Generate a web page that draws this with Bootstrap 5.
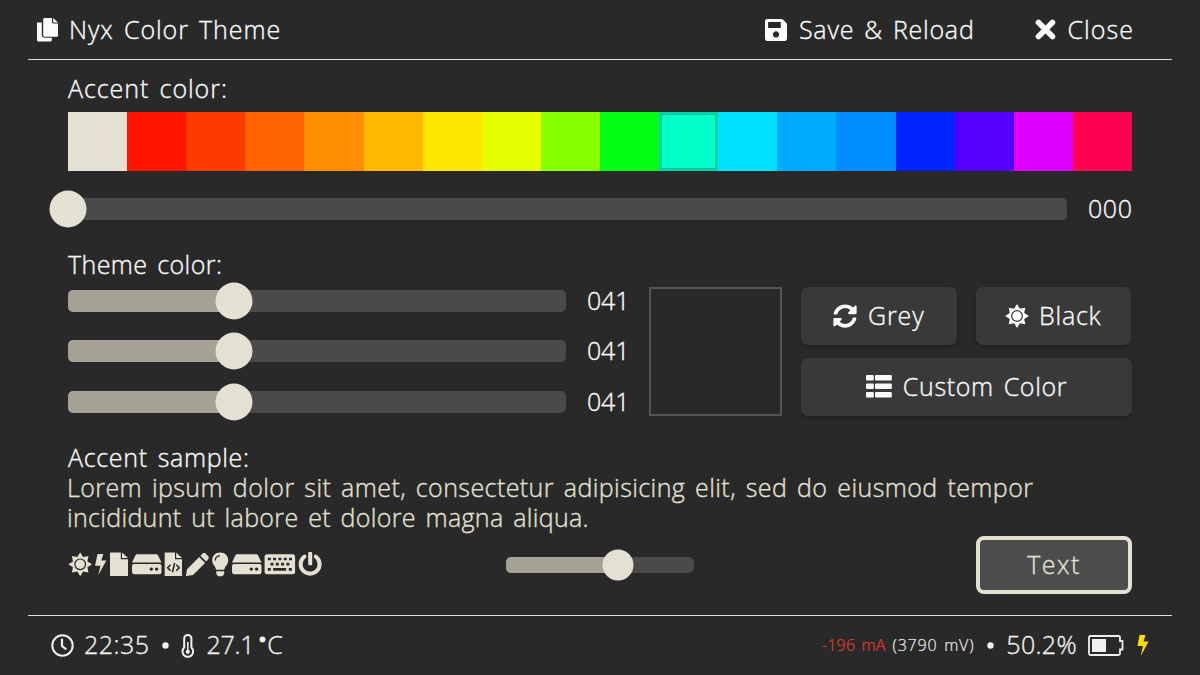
<!DOCTYPE html>
<html lang="en" data-bs-theme="dark">
<head>
<meta charset="utf-8">
<meta name="viewport" content="width=device-width, initial-scale=1">
<title>Nyx Color Theme</title>
<link href="https://cdn.jsdelivr.net/npm/bootstrap@5.3.0/dist/css/bootstrap.min.css" rel="stylesheet">
<style>
  :root { --accent: #e4e1d2; --accent-dim: #a5a295; --track: #4a4a4a; --line: #dcdcdc; }
  body { width: 1200px; height: 675px; background: #292929; color: #fbfbfb; overflow: hidden;
    font-family: "Open Sans", sans-serif; font-weight: 300; font-size: 25px; line-height: 30px;
    letter-spacing: .9px; word-spacing: 2.8px; white-space: nowrap; -webkit-text-stroke: .35px currentColor; }
  svg { display: block; flex: none; fill: currentColor; }
  .topbar { height: 60px; margin: 0 28px; padding: 0 38px 0 9px; border-bottom: 1px solid var(--line); }
  .bottombar { height: 60px; margin: 0 28px; padding: 0 23px; border-top: 1px solid var(--line); color: #f0f0f0; letter-spacing: .4px; }
  .bottombar span { margin-top: -3px; }
  .main-area { height: 555px; padding: 13px 68px 0; }
  .plain-btn { background: none; border: 0; padding: 0; color: inherit; font: inherit; letter-spacing: inherit; word-spacing: inherit; }
  .plain-btn span, .act span, .topbar > span { margin-top: -2px; }
  .swatches { height: 59.2px; width: 1064px; margin-top: 9.3px; }
  .swatches > div { flex: 1 1 0; }
  .swatches > .picked { box-shadow: inset 0 0 0 2px #00d3a8, inset 0 0 0 3px #00bf96; }
  .slide { height: 22px; background: var(--track); border-radius: 5px; position: relative; }
  .slide .fill { height: 100%; background: var(--accent-dim); border-radius: 5px 0 0 5px; }
  .slide .knob { position: absolute; top: 50%; width: 37px; height: 37px; border-radius: 50%;
    background: var(--accent); transform: translate(-50%, -50%); }
  .slide.mini { height: 16px; width: 188px; }
  .slide.mini .knob { width: 31px; height: 31px; }
  .val { width: 44px; margin-top: -2px; }
  .theme-grid { height: 129px; margin-top: 8px; }
  .rgb-rows { margin-top: -11.5px; letter-spacing: -.2px; }
  .rgb-row { height: 50.5px; }
  .preview { width: 133px; height: 129px; border: 2px solid #545454; }
  .act { background: #393939; color: #fbfbfb; border: 0; border-radius: 7px; height: 58px; padding: 0;
    font: inherit; letter-spacing: inherit; word-spacing: inherit; box-shadow: 0 2px 3px rgba(0,0,0,.22); }
  .act.half { width: 155.5px; }
  .act.focus-accent { width: 156px; border: 4px solid var(--accent); background: #4d4d4d; color: var(--accent); border-radius: 8px; box-shadow: none; }
  .lorem { color: var(--accent); letter-spacing: .42px; word-spacing: 2.9px; margin-left: -1px; }
  .icons-row { color: var(--accent); }
  .bottombar .small-info { font-size: 16px; letter-spacing: .6px; word-spacing: 1.8px; -webkit-text-stroke-width: .2px; margin-top: -1px; }
</style>
</head>
<body>

<header class="topbar d-flex align-items-center">
  <svg width="22" height="24" viewBox="0 0 22 24"><path d="M0 4.500h4.800v12.200q0 3 3 3h7v2.300q0 1.500-1.500 1.500H1.500Q0 23.500 0 22z"/><path d="M7.500 0h7.500v4q0 1.500 1.500 1.500h4.500v12.300q0 1-1 1H7.500q-1.300 0-1.300-1.300V1.300Q6.200 0 7.500 0z"/><path d="M16.200 0 21 4.600h-4.800z"/></svg>
  <span style="margin-left:10px;letter-spacing:.93px">Nyx Color Theme</span>
  <div class="ms-auto d-flex align-items-center">
    <button class="plain-btn d-flex align-items-center">
      <svg width="22" height="22" viewBox="0 0 22 22"><path fill-rule="evenodd" d="M2.300 0h14.200q.8 0 1.400.6l3.500 3.500q.6.600.6 1.400v14.200q0 2.300-2.300 2.300H2.300Q0 22 0 19.700V2.300Q0 0 2.300 0zM3.100 3.100v6h12.700v-6zM11 12.300a3.150 3.150 0 1 0 .01 0z"/></svg>
      <span style="margin-left:12px;letter-spacing:.77px">Save &amp; Reload</span>
    </button>
    <button class="plain-btn d-flex align-items-center" style="margin-left:60px">
      <svg width="21" height="21" viewBox="0 0 21 21"><path d="M3.500 3.500 17.500 17.500M17.500 3.500 3.500 17.500" stroke="currentColor" stroke-width="5.600" stroke-linecap="round"/></svg>
      <span style="margin-left:12px;letter-spacing:1.050px">Close</span>
    </button>
  </div>
</header>

<main class="main-area d-flex flex-column">
  <div style="letter-spacing:.95px">Accent color:</div>
  <div class="swatches d-flex" id="swatches"></div>

  <div class="d-flex align-items-center" style="margin-top:24px">
    <div class="slide" style="width:999px"><div class="knob" style="left:-.500px"></div></div>
    <div class="val" style="margin-left:21px;letter-spacing:.6px">000</div>
  </div>

  <div style="margin-top:25.500px;letter-spacing:.42px">Theme color:</div>
  <div class="theme-grid d-flex">
    <div class="rgb-rows" id="rgb"></div>
    <div class="preview" style="margin-left:18px"></div>
    <div class="d-flex flex-column justify-content-between" style="width:331px;margin-left:19px">
      <div class="d-flex justify-content-between" style="width:330px">
        <button class="act half d-flex align-items-center justify-content-center">
          <svg width="24" height="24" viewBox="0 0 512 512"><path d="M370.720 133.280C339.458 104.008 298.888 87.962 255.848 88c-77.458.068-144.328 53.178-162.791 126.850-1.344 5.363-6.122 9.150-11.651 9.150H24.103c-7.498 0-13.194-6.807-11.807-14.176C33.933 94.924 134.813 8 256 8c66.448 0 126.791 26.136 171.315 68.685L463.030 40.970C478.149 25.851 504 36.559 504 57.941V192c0 13.255-10.745 24-24 24H345.941c-21.382 0-32.090-25.851-16.971-40.971l41.750-41.749zM32 296h134.059c21.382 0 32.090 25.851 16.971 40.971l-41.750 41.750c31.262 29.273 71.835 45.319 114.876 45.280 77.418-.070 144.315-53.144 162.787-126.849 1.344-5.363 6.122-9.150 11.651-9.150h57.304c7.498 0 13.194 6.807 11.807 14.176C478.067 417.076 377.187 504 256 504c-66.448 0-126.791-26.136-171.315-68.685L48.970 471.030C33.851 486.149 8 475.441 8 454.059V320c0-13.255 10.745-24 24-24z"/></svg>
          <span style="margin-left:11px">Grey</span>
        </button>
        <button class="act half d-flex align-items-center justify-content-center">
          <svg width="24" height="24" viewBox="-12 -12 24 24"><use href="#sun"/><circle r="4.700"/></svg>
          <span style="margin-left:10px;letter-spacing:.75px">Black</span>
        </button>
      </div>
      <button class="act d-flex align-items-center justify-content-center">
        <svg width="26" height="23" viewBox="0 0 26 23"><rect width="7.800" height="5.500" rx="1"/><rect x="9" width="16.800" height="5.500" rx="1"/><rect y="8.500" width="7.800" height="5.500" rx="1"/><rect x="9" y="8.500" width="16.800" height="5.500" rx="1"/><rect y="17" width="7.800" height="5.500" rx="1"/><rect x="9" y="17" width="16.800" height="5.500" rx="1"/></svg>
        <span style="margin-left:11px;letter-spacing:.65px">Custom Color</span>
      </button>
    </div>
  </div>

  <div style="margin-top:26px;letter-spacing:.68px">Accent sample:</div>
  <div class="lorem">Lorem ipsum dolor sit amet, consectetur adipisicing elit, sed do eiusmod tempor<br><span style="letter-spacing:.32px">incididunt ut labore et dolore magna aliqua.</span></div>

  <div class="d-flex align-items-center" style="margin-top:4px;height:58px">
    <svg class="icons-row" width="256" height="26" viewBox="68 551 256 26" style="margin-top:-2px">
      <defs>
        <path id="sun" fill-rule="evenodd" d="M0-11.900 2.900-7.200 8.300-8.300 7.200-2.900 11.900 0 7.200 2.900 8.300 8.300 2.900 7.200 0 11.900-2.900 7.200-8.300 8.300-7.200 2.900-11.900 0-7.200-2.900-8.300-8.300-2.900-7.200zM0-5.900A5.900 5.900 0 1 0 .01-5.900z"/>
        <g id="drive"><path d="M5 0H24.500q.9 0 1.400.8L29.500 8.300H0L3.600.8Q4.100 0 5 0z"/><path fill-rule="evenodd" d="M2 9.800H27.500q2 0 2 2V17.800q0 2.200-2.200 2.200H2.200Q0 20 0 17.800V11.800q0-2 2-2zM19.300 13.200a1.650 1.650 0 1 0 .01 0zM24.600 13.200a1.650 1.650 0 1 0 .01 0z"/></g>
      </defs>
      <g transform="translate(80.200 564.300)"><use href="#sun"/><circle r="4.700"/></g>
      <path d="M97.500 554h5.800l-1.900 6.500h5L98.300 575l2.100-9.300h-5.400z"/>
      <path d="M110 552.500h10.800v6.800h7.200v16.700h-18zM122 552.500l6 5.600h-6z"/>
      <use href="#drive" x="132" y="554.300"/>
      <path d="M164.700 552.500h10.300v6.800h7v16.700h-17.300zM176.200 552.500l5.800 5.600h-5.800z"/>
      <path d="m170.500 564.800-2.800 3 2.800 3M176.300 564.800l2.800 3-2.800 3M174.600 563l-2.200 9.300" fill="none" stroke="#292929" stroke-width="1.600"/>
      <path d="M187 569.300 199.200 557l5.900 5.900L193 575l-6.500 1q-.6 0-.5-.6zM200.400 555.800l2.200-2.300q1.400-1.400 2.900 0l2.700 2.700q1.500 1.500 0 3l-2 2.300z"/>
      <path d="M220.200 552.500c5 0 8 3.500 8 7.700 0 4.500-3.100 5.300-4 9.600h-8c-.9-4.300-4-5.100-4-9.600 0-4.200 3-7.700 8-7.700zM216.300 571.300h7.900v2.700l-1.900 2.200h-4.100l-1.900-2.200z"/>
      <path d="M215.300 560.500q0-4.300 4.700-4.800" fill="none" stroke="#292929" stroke-width="1.300"/>
      <use href="#drive" x="232" y="554.300"/>
      <rect x="264.600" y="554.300" width="30.500" height="20" rx="2.500"/>
      <g fill="none" stroke="#292929" stroke-width="2.700"><path d="M267.800 559h24.500" stroke-dasharray="3 2.300"/><path d="M270.500 564.200h19" stroke-dasharray="3 2.300"/><path d="M267.800 569.400h3M273.200 569.400h13M288.800 569.400h3"/></g>
      <path d="M304.500 556.500a9.500 9.500 0 1 0 11.200 0" fill="none" stroke="currentColor" stroke-width="4" stroke-linecap="round"/><rect x="308.200" y="552" width="4" height="13.300" rx="1"/>
    </svg>
    <div class="slide mini" style="margin-left:182px"><div class="fill" style="width:60%"></div><div class="knob" style="left:112px"></div></div>
    <button class="act focus-accent ms-auto" style="letter-spacing:1.500px"><span class="d-block">Text</span></button>
  </div>
</main>

<footer class="bottombar d-flex align-items-center">
  <svg width="23" height="23" viewBox="0 0 23 23" style="fill:none" stroke="currentColor"><circle cx="11.500" cy="11.500" r="10.200" stroke-width="2"/><path d="M11 4.800v7.200l4.300 3.300" stroke-width="2.200"/></svg>
  <span style="margin-left:10px;letter-spacing:.5px">22:35</span>
  <svg width="7" height="7" viewBox="0 0 7 7" style="margin-left:12px"><circle cx="3.500" cy="3.500" r="3.200"/></svg>
  <svg width="14" height="24" viewBox="0 0 14 24" style="margin-left:12px;fill:none" stroke="currentColor"><path d="M3.200 13.600V4.600a3.600 3.600 0 0 1 7.200 0v9a5.300 5.300 0 1 1-7.200 0z" stroke-width="2"/><path d="M6.800 8v9" stroke-width="1.600"/><circle cx="6.800" cy="17.800" r="2.100" fill="currentColor" stroke="none"/></svg>
  <span style="margin-left:12px;letter-spacing:-.3px">27.1</span>
  <svg width="7" height="7" viewBox="0 0 7 7" style="margin-left:5px;margin-bottom:13px"><circle cx="3.500" cy="3.500" r="3"/></svg>
  <span style="margin-left:1px">C</span>
  <div class="ms-auto d-flex align-items-center">
    <span class="small-info" style="color:#e63b2c;letter-spacing:.2px">-196 mA</span>
    <span class="small-info" style="margin-left:7px;letter-spacing:.8px">(3790 mV)</span>
    <svg width="7" height="7" viewBox="0 0 7 7" style="margin-left:13px"><circle cx="3.500" cy="3.500" r="3.200"/></svg>
    <span style="margin-left:12px;letter-spacing:.35px">50.2%</span>
    <svg width="36" height="21" viewBox="0 0 36 21" style="margin-left:11px"><path d="M2.500 1h28q1.500 0 1.500 1.500V6h2.500v8.500H32v4q0 1.500-1.500 1.500h-28Q1 20 1 18.500v-16Q1 1 2.500 1z" fill="none" stroke="currentColor" stroke-width="1.800"/><rect x="4" y="4" width="14" height="13"/></svg>
    <svg width="12" height="21" viewBox="0 0 12 21" style="color:#ffdc00;margin-left:13px"><path d="M2.500 0h6L6.600 6.500h5L3.800 21l2.100-10H.5z"/></svg>
  </div>
</footer>

<script src="https://cdn.jsdelivr.net/npm/bootstrap@5.3.0/dist/js/bootstrap.bundle.min.js"></script>
<script>
  const hues = ['#e4e1d2','#ff1400','#ff3a00','#ff6400','#ff8f00','#ffb800','#ffe600','#e6ff00','#88ff00',
    '#00ff14','#00ffc9','#00e1ff','#00aaff','#008cff','#0023ff','#5500ff','#dc00ff','#ff0050'];
  document.getElementById('swatches').innerHTML = hues.map((c, i) =>
    `<div class="${i === 10 ? 'picked' : ''}" style="background:${c}"></div>`).join('');
  document.getElementById('rgb').innerHTML = [41, 41, 41].map(v =>
    `<div class="rgb-row d-flex align-items-center">
       <div class="slide" style="width:498px"><div class="fill" style="width:${v / 123 * 100}%"></div><div class="knob" style="left:${v / 123 * 100}%"></div></div>
       <div class="val" style="margin-left:21px">0${v}</div>
     </div>`).join('');
</script>
</body>
</html>
